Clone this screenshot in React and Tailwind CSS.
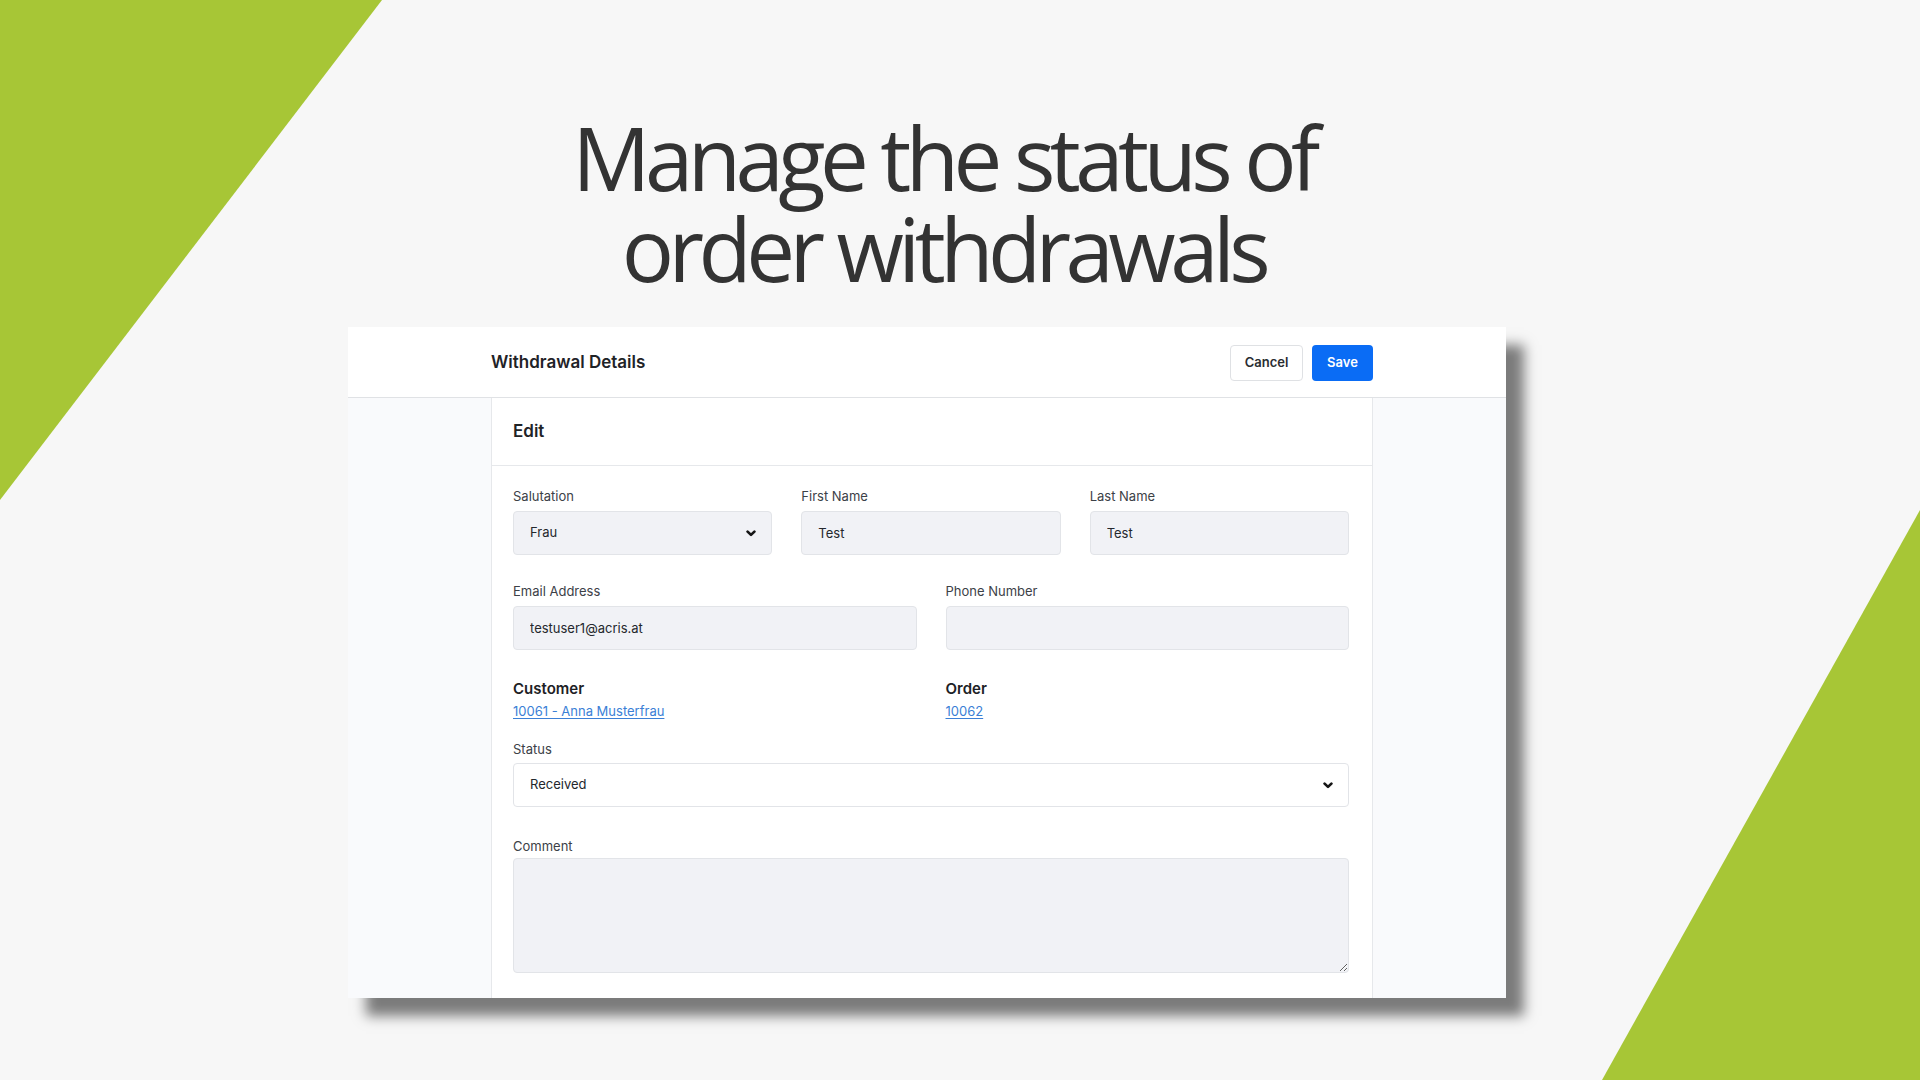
import React from "react"

const ui = { fontFamily: "Inter, 'Noto Sans', sans-serif" }

function Chevron() {
  return (
    <svg width="10" height="7" viewBox="0 0 10 7" className="shrink-0">
      <path d="M1.6 1.6l3.4 3.3 3.4-3.3" fill="none" stroke="#161616" strokeWidth="2.7" strokeLinecap="round" strokeLinejoin="round" />
    </svg>
  )
}

function Label({ children, className = "" }) {
  return <div className={`text-[13px] leading-4 text-[#3c4147] ${className}`}>{children}</div>
}

function TextField({ label, value }) {
  return (
    <div>
      <Label className="mb-[7px]">{label}</Label>
      <input
        readOnly
        value={value}
        className="w-full h-[44px] rounded-[4px] border border-[#e2e4e8] bg-[#f1f2f6] px-4 text-[13px] text-[#24282d] outline-none"
        style={ui}
      />
    </div>
  )
}

function SelectField({ label, value, white, labelGap = "mb-[7px]" }) {
  return (
    <div>
      <Label className={labelGap}>{label}</Label>
      <div
        className={`flex items-center justify-between h-[44px] rounded-[4px] border border-[#e2e4e8] pl-4 pr-[15px] text-[13px] text-[#24282d] ${
          white ? "bg-white" : "bg-[#f1f2f6]"
        }`}
      >
        <span>{value}</span>
        <Chevron />
      </div>
    </div>
  )
}

function LinkField({ title, link }) {
  return (
    <div>
      <div className="text-[15px] leading-5 font-semibold text-[#1d2125]">{title}</div>
      <a href="#" className="block mt-[4px] text-[13px] leading-4 text-[#3b7fd6] underline underline-offset-2">
        {link}
      </a>
    </div>
  )
}

export default function App() {
  return (
    <div className="relative w-[1920px] h-[1080px] overflow-hidden bg-[#f7f7f7]">
      {/* green corner wedges */}
      <svg className="absolute inset-0" width="1920" height="1080" viewBox="0 0 1920 1080">
        <polygon points="0,0 382,0 0,500" fill="#a7c636" />
        <polygon points="1920,510 1920,1080 1602,1080" fill="#a7c636" />
      </svg>

      <div className="relative">
        <h1
          className="pt-[112px] pr-[33px] text-center text-[87px] tracking-[-0.064em] text-[#333333]"
          style={{ fontFamily: "'Open Sans', sans-serif" }}
        >
          <div className="h-[91px] leading-[91px]">Manage the status of</div>
          <div className="h-[91px] leading-[91px]">order withdrawals</div>
        </h1>

        <div
          className="mt-[33px] ml-[348px] w-[1158px] h-[671px] flex flex-col overflow-hidden bg-[#f9fafc] shadow-[18px_18px_12px_rgba(0,0,0,0.5)]"
          style={ui}
        >
          {/* top bar */}
          <div className="h-[71px] shrink-0 bg-white border-b border-[#e0e2e5]">
            <div className="ml-[143px] w-[882px] h-full flex items-center justify-between">
              <div className="pt-px text-[17px] font-semibold text-[#1f2327]">Withdrawal Details</div>
              <div className="flex items-center gap-[9px] pt-px">
                <button className="h-[36px] w-[73px] rounded-[4px] border border-[#dfe1e4] bg-white text-[13px] font-semibold text-[#2a2d31]">
                  Cancel
                </button>
                <button className="h-[36px] w-[61px] rounded-[4px] bg-[#0a6cf5] text-[13px] font-semibold text-white">
                  Save
                </button>
              </div>
            </div>
          </div>

          {/* form card */}
          <div className="ml-[143px] w-[882px] flex-1 bg-white border-x border-[#e6e8eb]">
            <div className="h-[68px] flex items-center pl-[21px] border-b border-[#e6e8eb] text-[17px] font-semibold text-[#1f2327]">
              Edit
            </div>
            <div className="pl-[21px] pr-[23px] pt-[22px]">
              <div className="grid grid-cols-3 gap-x-[29px]">
                <SelectField label="Salutation" value="Frau" />
                <TextField label="First Name" value="Test" />
                <TextField label="Last Name" value="Test" />
              </div>

              <div className="grid grid-cols-2 gap-x-[29px] mt-[28px]">
                <TextField label="Email Address" value="testuser1@acris.at" />
                <TextField label="Phone Number" value="" />
              </div>

              <div className="grid grid-cols-2 gap-x-[29px] mt-[29px]">
                <LinkField title="Customer" link="10061 - Anna Musterfrau" />
                <LinkField title="Order" link="10062" />
              </div>

              <div className="mt-[22px]">
                <SelectField label="Status" value="Received" white labelGap="mb-[6px]" />
              </div>

              <div className="mt-[31px]">
                <Label className="mb-[4px]">Comment</Label>
                <textarea
                  readOnly
                  className="block w-full h-[115px] rounded-[4px] border border-[#e2e4e8] bg-[#f1f2f6] px-4 py-3 text-[13px] outline-none resize-y"
                  style={ui}
                />
              </div>
            </div>
          </div>
        </div>
      </div>
    </div>
  )
}
